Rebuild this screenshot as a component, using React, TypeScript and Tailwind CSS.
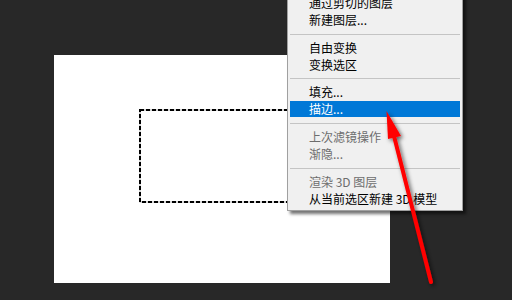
const font = "font-['Noto_Sans_CJK_SC','Noto_Sans',sans-serif]";

type Item = { label: string; disabled?: boolean; active?: boolean } | "sep";

const items: Item[] = [
  { label: "通过剪切的图层" },
  { label: "新建图层..." },
  "sep",
  { label: "自由变换" },
  { label: "变换选区" },
  "sep",
  { label: "填充..." },
  { label: "描边...", active: true },
  "sep",
  { label: "上次滤镜操作", disabled: true },
  { label: "渐隐...", disabled: true },
  "sep",
  { label: "渲染 3D 图层", disabled: true },
  { label: "从当前选区新建 3D 模型" },
];

function ContextMenu() {
  let sepCount = 0;
  return (
    <div className="absolute left-[287px] top-[-8px] w-[176px] border border-[#a0a0a0] bg-[#f0f0f0] p-[2px] pb-[3px] shadow-[3px_3px_3px_rgba(0,0,0,0.55)]">
      {items.map((it, i) => {
        if (it === "sep") {
          sepCount++;
          return (
            <div key={i} className={`flex items-center ${sepCount === 2 ? "h-[11px]" : "h-[12px]"}`}>
              <div className="h-px w-full bg-[#c4c4c4]" />
            </div>
          );
        }
        return (
          <div
            key={i}
            className={`flex h-[16.5px] items-center pl-[19px] text-[12px] leading-none ${
              it.active ? "bg-[#0078d7] text-white" : it.disabled ? "text-[#6d6d6d]" : "text-black"
            }`}
          >
            {it.label}
          </div>
        );
      })}
    </div>
  );
}

export default function App() {
  return (
    <div className={`relative h-[300px] w-[512px] overflow-hidden bg-[#282828] pl-[54px] pt-[55px] ${font}`}>
      <div className="relative h-[228px] w-[336px] bg-white">
        <svg className="absolute left-[85px] top-[54px]" width="240" height="95">
          <rect x="1" y="1" width="236" height="92" fill="none" stroke="#b0b0b0" strokeWidth="1" />
          <rect x="1" y="1" width="236" height="92" fill="none" stroke="#000" strokeWidth="2" strokeDasharray="4 2" />
        </svg>
      </div>
      <ContextMenu />
      <svg className="pointer-events-none absolute left-0 top-0" width="512" height="300">
        <defs>
          <filter id="sh" x="-50%" y="-50%" width="200%" height="200%">
            <feDropShadow dx="2" dy="2" stdDeviation="2" floodColor="#000" floodOpacity="0.6" />
          </filter>
        </defs>
        <g filter="url(#sh)">
          <line x1="431" y1="282" x2="393" y2="132" stroke="#ff0000" strokeWidth="4" strokeLinecap="round" />
          <polygon points="386.5,111 401,136 388,139" fill="#ff0000" />
        </g>
      </svg>
    </div>
  );
}
